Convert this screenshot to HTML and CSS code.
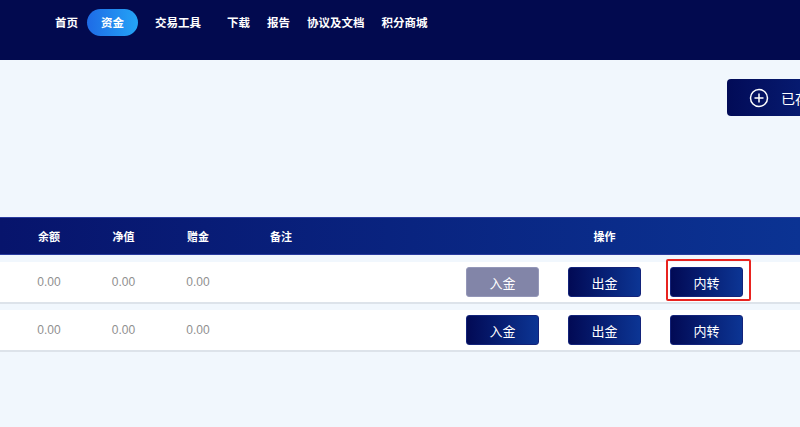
FILE: index.html
```html
<!DOCTYPE html>
<html lang="zh-CN">
<head>
  <meta charset="UTF-8">
  <title>资金</title>
  <link rel="stylesheet" href="styles.css">
</head>
<body>
  <header class="topbar">
    <nav class="nav">
      <a class="nav-item first">首页</a>
      <a class="nav-item active">资金</a>
      <a class="nav-item tools">交易工具</a>
      <a class="nav-item">下载</a>
      <a class="nav-item">报告</a>
      <a class="nav-item">协议及文档</a>
      <a class="nav-item">积分商城</a>
    </nav>
  </header>

  <div class="toolbar">
    <button class="add-btn" type="button">
      <svg width="20" height="20" viewBox="0 0 20 20">
        <circle cx="10" cy="10" r="8.5" fill="none" stroke="#fff" stroke-width="1.5"/>
        <path d="M10 5.5v9M5.5 10h9" stroke="#fff" stroke-width="1.5"/>
      </svg>
      <span>已存在账户</span>
    </button>
  </div>

  <div class="table">
    <div class="row head">
      <div class="cell">余额</div>
      <div class="cell">净值</div>
      <div class="cell">赠金</div>
      <div class="cell">备注</div>
      <div class="cell"></div>
      <div class="cell">操作</div>
    </div>

    <div class="row">
      <div class="cell num">0.00</div>
      <div class="cell num">0.00</div>
      <div class="cell num">0.00</div>
      <div class="cell"></div>
      <div class="cell"></div>
      <div class="cell ops">
        <button class="op disabled" type="button">入金</button>
        <button class="op" type="button">出金</button>
        <span class="marked">
          <button class="op" type="button">内转</button>
          <span class="mark"></span>
        </span>
      </div>
    </div>

    <div class="row">
      <div class="cell num">0.00</div>
      <div class="cell num">0.00</div>
      <div class="cell num">0.00</div>
      <div class="cell"></div>
      <div class="cell"></div>
      <div class="cell ops">
        <button class="op" type="button">入金</button>
        <button class="op" type="button">出金</button>
        <button class="op" type="button">内转</button>
      </div>
    </div>
  </div>
</body>
</html>
```

FILE: styles.css
```css
body {
  margin: 0;
  background: #f1f7fd;
  font-family: "Liberation Sans", "Noto Sans CJK SC", sans-serif;
  overflow: hidden;
  height: 427px;
}

.topbar {
  height: 60px;
  background: #020a4f;
}

.nav {
  display: flex;
  align-items: center;
  gap: 17px;
  padding: 9px 0 0 55px;
  height: 27px;
}

.nav-item {
  color: #fff;
  font-family: "Noto Sans CJK SC", sans-serif;
  font-weight: bold;
  font-size: 11.5px;
  line-height: 27px;
  white-space: nowrap;
}

.nav-item.first {
  margin-right: -8px;
}

.nav-item.tools {
  margin-right: 9px;
}

.nav-item.active {
  padding: 0 14px;
  border-radius: 14px;
  background: linear-gradient(90deg, #1e6be6, #24a4f6);
}

.toolbar {
  display: flex;
  padding: 19px 0 0 727px;
  height: 138px;
}

.add-btn {
  display: flex;
  align-items: center;
  gap: 12px;
  flex-shrink: 0;
  width: 160px;
  height: 37px;
  padding: 0 0 0 22px;
  border: none;
  border-radius: 4px;
  background: linear-gradient(90deg, #020b57, #0b2c8c);
  color: #fff;
  font-family: "Noto Sans CJK SC", sans-serif;
  font-size: 14px;
  white-space: nowrap;
}

.row {
  display: grid;
  grid-template-columns: 74px 75px 74px 92px 82px 1fr;
  align-items: center;
  padding-left: 12px;
  height: 40px;
  background: #fff;
  border-bottom: 2px solid #dde3ea;
  margin-bottom: 6px;
}

.row.head {
  height: 36px;
  margin-bottom: 7px;
  background: linear-gradient(90deg, #07146c, #0b3393);
  border-top: 1px solid #2a3c9e;
  border-bottom: 1px solid #2a3c9e;
  color: #fff;
  font-family: "Noto Sans CJK SC", sans-serif;
  font-weight: bold;
  font-size: 11px;
}

.cell {
  text-align: center;
}

.num {
  color: #8f8f8f;
  font-size: 12px;
}

.ops {
  display: flex;
  justify-content: center;
  gap: 29px;
}

.op {
  width: 73px;
  height: 30px;
  border: 1px solid #13237a;
  border-radius: 3px;
  background: linear-gradient(90deg, #020a55, #0c3594);
  color: #fff;
  font-family: "Noto Sans CJK SC", sans-serif;
  font-size: 13px;
  padding: 0;
}

.op.disabled {
  background: #8285a8;
  border-color: #9497b8;
}

.marked {
  position: relative;
  display: flex;
}

.mark {
  position: absolute;
  top: -8px;
  left: -4px;
  right: -8px;
  bottom: -4px;
  border: 2px solid #e8231f;
  border-radius: 2px;
}
```
